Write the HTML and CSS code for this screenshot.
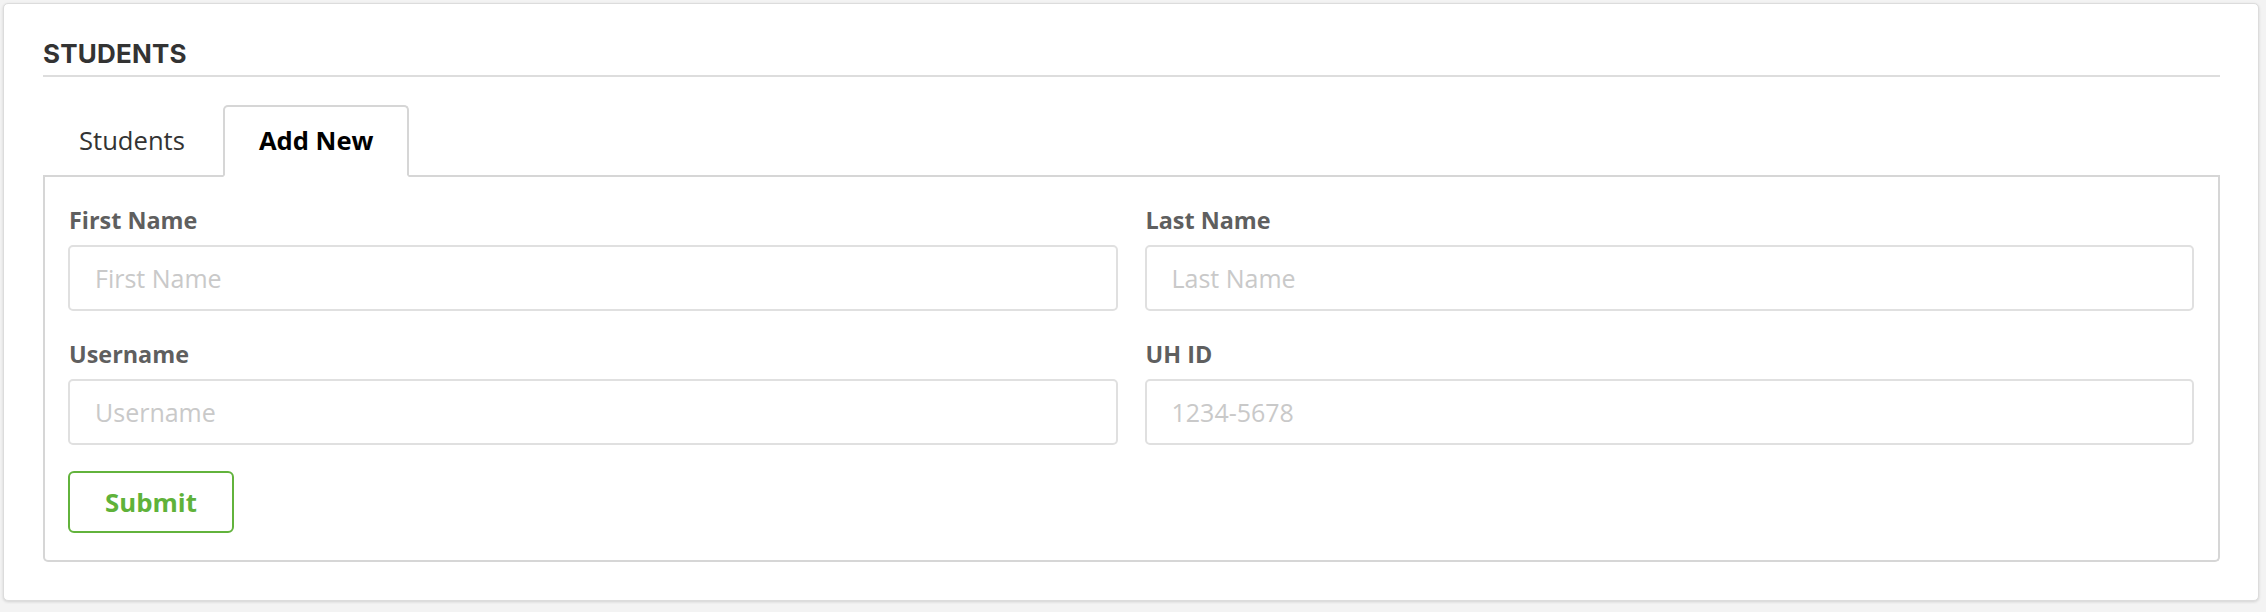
FILE: index.html
```html
<!DOCTYPE html>
<html lang="en">
<head>
<meta charset="utf-8">
<title>Students</title>
<link rel="stylesheet" href="styles.css">
</head>
<body>
<div class="card">
  <h2 class="card-title">STUDENTS</h2>
  <ul class="tabs">
    <li class="tab">Students</li>
    <li class="tab tab-active">Add New</li>
  </ul>
  <form class="panel">
    <div class="grid">
      <div class="field">
        <label class="label">First Name</label>
        <input class="input" type="text" placeholder="First Name">
      </div>
      <div class="field">
        <label class="label">Last Name</label>
        <input class="input" type="text" placeholder="Last Name">
      </div>
      <div class="field">
        <label class="label">Username</label>
        <input class="input" type="text" placeholder="Username">
      </div>
      <div class="field">
        <label class="label">UH ID</label>
        <input class="input" type="text" placeholder="1234-5678">
      </div>
    </div>
    <button class="btn" type="button">Submit</button>
  </form>
</div>
</body>
</html>
```

FILE: styles.css
```css
* { box-sizing: border-box; }

html, body {
  margin: 0;
  padding: 0;
  background: #f3f3f3;
}

body {
  padding: 3px 7px 3px 3px;
  font-family: "Open Sans", "Noto Sans", sans-serif;
}

.card {
  background: #fff;
  border: 1px solid #dcdcdc;
  border-radius: 5px;
  box-shadow: 0 1px 3px rgba(0, 0, 0, 0.14);
  padding: 35px 38px 38px 39px;
}

.card-title {
  margin: 0;
  font-family: "Inter", "Liberation Sans", sans-serif;
  font-weight: 700;
  font-size: 26px;
  line-height: 30px;
  color: #333;
  letter-spacing: 0.2px;
  padding-bottom: 6px;
  border-bottom: 2px solid #dddddd;
}

.tabs {
  list-style: none;
  margin: 28px 0 0 0;
  padding: 0;
  display: flex;
  border-bottom: 2px solid #d6d6d6;
}

.tab {
  font-size: 25.6px;
  line-height: 34px;
  color: #333;
  padding: 17px 34px 17px 34px;
  border: 2px solid transparent;
  border-radius: 5px 5px 0 0;
  margin-right: 2px;
  margin-bottom: -2px;
}

.tab-active {
  font-weight: 700;
  color: #000;
  border-color: #d6d6d6;
  border-bottom-color: #fff;
  background: #fff;
}

.panel {
  margin: 0;
  border: 2px solid #d6d6d6;
  border-top: 0;
  border-radius: 0 0 5px 5px;
  padding: 28px 24px 27px 23px;
}

.grid {
  display: grid;
  grid-template-columns: 1fr 1fr;
  column-gap: 27px;
  row-gap: 28px;
}

.field {
  display: flex;
  flex-direction: column;
}

.label {
  font-weight: 700;
  font-size: 23.4px;
  line-height: 28px;
  color: #5f5f5f;
  margin-top: 1px;
  margin-bottom: 11px;
  padding-left: 1px;
}

.input {
  height: 66px;
  border: 2px solid #e0e0e0;
  border-radius: 5px;
  padding: 0 25px;
  font-family: "Open Sans", "Noto Sans", sans-serif;
  font-size: 25px;
  color: #333;
  background: #fff;
  outline: none;
}

.input::placeholder {
  color: #c9c9c9;
}

.btn {
  margin-top: 26px;
  height: 62px;
  padding: 0 35px;
  border: 2px solid #62b33c;
  border-radius: 6px;
  background: #fff;
  color: #5fb23a;
  font-family: "Open Sans", "Noto Sans", sans-serif;
  font-weight: 700;
  font-size: 25.8px;
  line-height: 34px;
  cursor: pointer;
}
```
